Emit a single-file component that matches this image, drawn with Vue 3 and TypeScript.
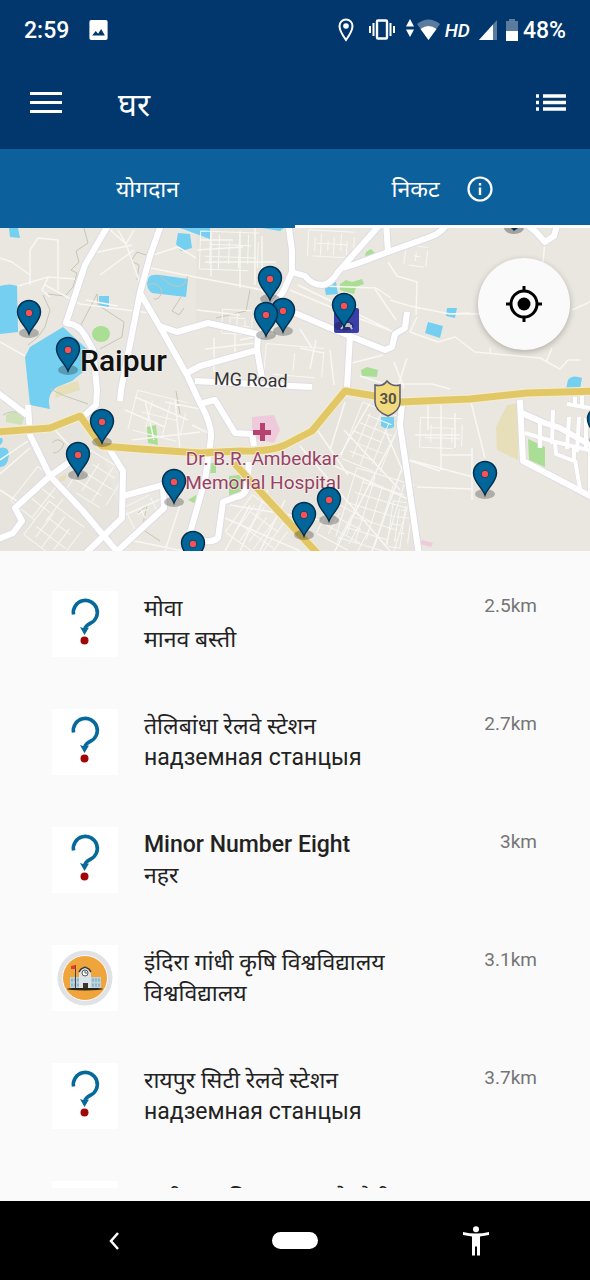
<script setup lang="ts">
interface Place {
  name: string
  kind?: string
  distance?: string
  icon: 'unknown' | 'school' | 'blank'
  latin?: boolean
}

interface Block {
  x: number
  y: number
  w: number
  h: number
  cols: number
  rows: number
  angle: number
}

const places: Place[] = [
  { name: 'मोवा', kind: 'मानव बस्ती', distance: '2.5km', icon: 'unknown' },
  { name: 'तेलिबांधा रेलवे स्टेशन', kind: 'надземная станцыя', distance: '2.7km', icon: 'unknown' },
  { name: 'Minor Number Eight', kind: 'नहर', distance: '3km', icon: 'unknown', latin: true },
  { name: 'इंदिरा गांधी कृषि विश्वविद्यालय', kind: 'विश्वविद्यालय', distance: '3.1km', icon: 'school' },
  { name: 'रायपुर सिटी रेलवे स्टेशन', kind: 'надземная станцыя', distance: '3.7km', icon: 'unknown' },
  { name: 'छत्तीसगढ़ विज्ञान भवन के मैत्री', icon: 'blank' },
]

// Pin tips, in map units; later pins overlap earlier ones.
const pins: [number, number][] = [
  [270, 300], [283, 332], [266, 336], [344, 327], [29, 334], [68, 371], [102, 443],
  [78, 476], [174, 503], [193, 565], [329, 521], [304, 536], [485, 495], [599, 441],
]

const mainRoads: string[] = [
  'M110 222L85 265L66 323Q78 324 84 334L93 350L97 390L96 405L84 416',
  'M162 222L150 256L140 293L121 390L120 401',
  'M140 293L160 327L187 375L200 403Q212 424 211 438L205 480L188 540',
  'M160 326L177 332L208 323L262 335L264 318L283 292L292 272L292 250L288 222',
  'M187 373L200 366L257 350L258 335M257 350L262 378',
  'M195 381L312 387',
  'M292 272L305 276Q312 285 322 285Q331 284 338 272L384 220',
  'M343 268L356 264L388 252L430 237Q442 233 448 222M388 252L386 222',
  'M295 313L335 330L385 350L392 347L395 334L405 328L407 312',
  'M350 335L347 388',
  'M524 222L536 232L545 242L554 236L558 222',
  'M-2 393L27 415M28 405L30 435L50 476L83 511L120 555',
  'M84 452L50 476L15 508L22 521L13 533L-2 539',
  'M110 450L123 471L122 518L84 555M123 496L163 485L164 508L113 555',
  'M203 403L215 400L235 433L252 434L254 446M249 462L247 487Q245 496 236 497L223 502L218 538Q210 544 198 539',
  'M402 404L400 425L419 555',
  'M520 400L523 461L592 497M522 413L542 422L560 428L592 446',
]

const estateRoads =
  'M540 421V448M553 410L552 444M569 417L567 449M579 417L577 452M586 418V450M525 433L552 441L592 451M555 443L556 454L574 461V448M575 460L580 489M590 448V493M567 404L590 408M575 397V405M582 396V407'

const minorRoads =
  'M30 285V250L38 238L58 240V290M0 258L12 262L30 275M18 286L48 277L75 279M45 285L80 304L150 313M48 278L42 290L50 297M108 228L126 244L140 283M93 253L132 245M118 230L126 244L134 230M100 275L134 250M86 300L118 306M146 267L200 278M150 256L178 247L196 258M0 342L25 356M195 277L258 289M255 289L283 292M197 250L243 247M200 240H233M240 231V288M205 262H276M211 232V276M255 228V285M262 236V292M197 310L240 315M214 338V372M235 330V360M205 349L256 343M290 290L350 315L394 332M298 285L390 330M322 286L376 288L391 298M375 289L396 320M388 262L397 276L417 282L416 315M390 300L410 306L450 314L470 313M455 314H480M417 317L410 332L438 342L455 337L475 352L540 358L560 369L568 360H580M490 348L491 354M552 348L546 362M545 242L543 262M572 310L590 302M392 384H432L450 389M394 362L404 388M407 358L398 386M330 350L334 385M352 363L383 355M360 376L382 383M300 348L324 353M300 329L312 348M316 340L310 369M165 402L205 410M145 400L154 440M125 410L165 427M135 397L188 420M175 400L180 450M132 440L200 432M0 474L30 448M0 460L28 441M0 490L20 503M55 430L75 452M240 340L275 333M410 460L473 477M417 487L473 489M471 402L485 458M472 448V500M441 404V470M428 405V430M455 413V448M415 435H460M441 455H473M402 458L440 471M300 446L390 551M318 431L348 475M345 402L330 450M370 403L340 455M385 430L405 476M344 430L400 490M395 435L335 551M405 460L372 551M230 505L320 520M218 515L300 551M250 505L225 551M268 490L240 551M285 500L260 551M335 466L410 500M125 515L170 495M130 540L183 551M180 505L165 551M192 425L208 433'

const blocks: Block[] = [
  { x: 200, y: 232, w: 58, h: 38, cols: 6, rows: 3, angle: 2 },
  { x: 308, y: 231, w: 46, h: 26, cols: 7, rows: 2, angle: 3 },
  { x: 222, y: 310, w: 30, h: 24, cols: 4, rows: 3, angle: 3 },
  { x: 405, y: 246, w: 22, h: 20, cols: 2, rows: 2, angle: 8 },
  { x: 20, y: 474, w: 40, h: 44, cols: 3, rows: 3, angle: 38 },
  { x: 76, y: 458, w: 42, h: 44, cols: 3, rows: 4, angle: 32 },
  { x: 32, y: 510, w: 44, h: 42, cols: 4, rows: 3, angle: 37 },
  { x: 128, y: 500, w: 28, h: 24, cols: 2, rows: 2, angle: -26 },
  { x: 234, y: 505, w: 50, h: 46, cols: 6, rows: 3, angle: 36 },
  { x: 350, y: 408, w: 42, h: 60, cols: 4, rows: 6, angle: 22 },
  { x: 345, y: 475, w: 60, h: 72, cols: 6, rows: 6, angle: 17 },
  { x: 322, y: 510, w: 45, h: 36, cols: 4, rows: 3, angle: 28 },
  { x: 390, y: 502, w: 20, h: 46, cols: 3, rows: 6, angle: 8 },
  { x: 420, y: 418, w: 42, h: 30, cols: 4, rows: 3, angle: 2 },
  { x: 265, y: 346, w: 58, h: 30, cols: 2, rows: 1, angle: 5 },
  { x: 132, y: 396, w: 52, h: 40, cols: 3, rows: 2, angle: 14 },
]

/** Street lines of a rectangular block, both directions. */
function blockPath(b: Block): string {
  const parts: string[] = []
  for (let i = 0; i <= b.cols; i++) {
    const x = Math.round(b.x + (b.w * i) / b.cols)
    const trim = (i * 7) % 11
    parts.push(`M${x} ${b.y + trim}V${b.y + b.h - ((i * 5) % 9)}`)
  }
  for (let i = 0; i <= b.rows; i++) {
    const y = Math.round(b.y + (b.h * i) / b.rows)
    parts.push(`M${b.x + ((i * 9) % 13)} ${y}H${b.x + b.w - ((i * 7) % 12)}`)
  }
  return parts.join('')
}

function blockTurn(b: Block): string {
  return `rotate(${b.angle} ${b.x + b.w / 2} ${b.y + b.h / 2})`
}
</script>

<template>
  <div class="screen">
    <header class="top">
      <div class="status">
        <span class="clock">2:59</span>
        <svg class="picture" viewBox="0 0 20 22" aria-hidden="true">
          <path fill="#fff" fill-rule="evenodd" d="M2 0H18Q20 0 20 2V20Q20 22 18 22H2Q0 22 0 20V2Q0 0 2 0ZM3 17H17L13 10L9.500 15L7 12Z" />
        </svg>
        <span class="spacer"></span>
        <svg class="place" viewBox="0 0 16 24" aria-hidden="true">
          <path fill="none" stroke="#fff" stroke-width="2" d="M8 22Q1.500 13 1.500 8A6.500 6.500 0 0 1 14.500 8Q14.500 13 8 22Z" />
          <circle cx="8" cy="8" r="2.800" fill="#fff" />
        </svg>
        <svg class="vibrate" viewBox="0 0 28 24" aria-hidden="true">
          <rect x="9" y="2.500" width="10" height="18" rx="1" fill="none" stroke="#fff" stroke-width="2.400" />
          <path stroke="#fff" stroke-width="2" d="M5.500 5V18M22.500 5V18M2 8V15M26 8V15" />
        </svg>
        <svg class="wifi" viewBox="0 0 34 24" aria-hidden="true">
          <path fill="#fff" d="M0 8.500L4 1L8 8.500ZM0 11.500H8L4 19Z" />
          <path fill="#5b7b9f" d="M11 6Q22.500 -3 34 6L22.500 22Z" />
          <path fill="#fff" d="M14.500 11Q22.500 5 30.500 11L22.500 22Z" />
        </svg>
        <span class="hd">HD</span>
        <svg class="signal" viewBox="0 0 18 20" aria-hidden="true">
          <path fill="#5b7b9f" d="M18 0V20H0Z" />
          <path fill="#fff" d="M14 4.400V20H0Z" />
        </svg>
        <svg class="battery" viewBox="0 0 12 22" aria-hidden="true">
          <path fill="#5b7b9f" d="M3 0H9V2H12V14H0V2H3Z" />
          <path fill="#fff" d="M0 12H12V22H0Z" />
        </svg>
        <span class="percent">48%</span>
      </div>
      <div class="appbar">
        <button class="icon-button menu" type="button" aria-label="मेनू">
          <svg viewBox="0 0 32 24" width="32" height="24"><path stroke="#fff" stroke-width="3" d="M0 2.500H32M0 11.500H32M0 20.500H32" /></svg>
        </button>
        <h1>घर</h1>
        <button class="icon-button" type="button" aria-label="सूची">
          <svg viewBox="0 0 30 20" width="30" height="20">
            <path stroke="#fff" stroke-width="3.500" d="M0 3H3M7 3H30M0 9.500H3M7 9.500H30M0 16H3M7 16H30" />
          </svg>
        </button>
      </div>
      <nav class="tabs">
        <button class="tab" type="button"><span>योगदान</span></button>
        <button class="tab active" type="button">
          <span>निकट</span>
          <svg viewBox="0 0 26 26" width="26" height="26" aria-hidden="true">
            <circle cx="13" cy="13" r="11.500" fill="none" stroke="#fff" stroke-width="2.200" />
            <path stroke="#fff" stroke-width="2.400" d="M13 11.500V19M13 7V9.500" />
          </svg>
        </button>
      </nav>
    </header>

    <section class="map" aria-label="Raipur">
      <svg class="canvas" viewBox="0 228 590 323" preserveAspectRatio="xMidYMid slice">
        <defs>
          <g id="pin">
            <path
              fill="#006699" stroke="#04304f" stroke-width="1.500"
              d="M0 0C-3 -8 -11.500 -13 -11.500 -22A11.500 11.500 0 0 1 11.500 -22C11.500 -13 3 -8 0 0Z"
            />
            <circle cy="-21" r="3.800" fill="#ff5054" stroke="#064a70" stroke-width="1" />
          </g>
        </defs>
        <rect y="228" width="590" height="323" fill="#eae7e0" />

        <g fill="#e7e4dd">
          <path d="M196 228H288L292 272L262 335L196 325Z" />
          <path d="M0 435L80 420L102 450L122 518L87 551H0Z" />
          <path d="M282 450L345 398L400 408L418 551H315L233 466Z" />
        </g>

        <g fill="#75cff0">
          <path d="M0 286Q10 283 17 286L18 332L0 334Z" />
          <path d="M63 327L30 347L25 357L30 405L50 409Q46 394 57 387L72 381L83 372L88 350Z" />
          <path d="M9 228H18L20 238L10 237ZM99 296H109V308L99 305ZM178 233L190 234L192 248L181 251L176 244ZM180 228H210V239Z" />
          <path d="M149 277Q152 274 160 275L188 279L186 297L152 293Q144 287 149 277ZM262 228H284L280 231Z" />
          <path d="M324 284L336 282L338 294L326 295ZM447 308H457L455 318L446 316ZM428 322L443 326L440 338L425 333ZM568 380Q572 374 582 378L580 389H566Z" />
          <path d="M0 438V445Q4 443 2 438ZM0 448Q8 446 9 454Q8 467 0 467ZM381 417H394V427Q387 431 381 426Z" />
        </g>
        <g fill="#aade94">
          <ellipse cx="101" cy="334" rx="9" ry="8" />
          <path d="M340 284L346 280L352 282L362 279L364 284L356 287L354 294L340 290ZM366 252L371 249L377 255L365 256ZM361 370L367 367L378 370L377 377L362 376Z" />
          <path d="M147 427L156 425L158 445L148 443ZM528 439L545 447V467L529 460ZM229 476L250 474L248 487L229 497ZM211 463H216V473H210ZM188 500L196 495V504Z" />
          <path fill="#cfe1b9" d="M6 415Q14 409 25 414L22 425L6 422Z" />
        </g>
        <path fill="#e6dfb9" d="M507 405L518 403V460L497 450L496 427ZM59 477L67 474L65 480L58 483ZM57 387L78 381L80 390L55 398Z" />
        <path fill="#efcadb" d="M252 417L274 415L280 430L274 443L252 438ZM422 540L433 543L431 547L420 544Z" />

        <path
          class="trail"
          d="M84 228L88 243L76 251L79 262L71 270L77 273L73 287L65 296L48 294M43 295L50 310L45 327L38 337L28 345M81 325L97 294L98 305L124 322L122 337L100 349M137 280L139 265L131 261L137 252L146 255M148 285Q157 280 162 291Q160 300 154 299M160 276Q176 292 184 284L188 276M181 297L172 311L179 315L184 308M3 415Q12 409 23 414M50 389L65 396L88 404M52 443Q58 436 64 444Q60 453 53 453M216 318L246 311L250 290M138 513L147 505L142 529L160 541M176 391L180 414"
        />
        <path class="lane" :d="minorRoads" />
        <path v-for="(b, i) in blocks" :key="i" class="lane fine" :d="blockPath(b)" :transform="blockTurn(b)" />

        <path class="casing" :d="mainRoads.join('')" />
        <path class="casing small" :d="estateRoads" />
        <path class="road small" :d="estateRoads" />
        <path class="road" :d="mainRoads.join('')" />
        <path class="highway edge" d="M-5 432L50 428L80 416L102 446L140 449L200 453L240 451Q270 452 285 445L312 431L345 391L375 396L400 402L470 399L527 393L595 391M234 463L318 554" />
        <path class="highway" d="M-5 432L50 428L80 416L102 446L140 449L200 453L240 451Q270 452 285 445L312 431L345 391L375 396L400 402L470 399L527 393L595 391M234 463L318 554" />

        <path fill="#b8426f" d="M260 423H265V430H271V435H265V441H260V435H253V430H260Z" />
        <rect x="334" y="308" width="25" height="25" rx="2" fill="#3a3ea8" />
        <path fill="none" stroke="#fff" stroke-width="2" d="M341 329L345 324H349L352 329M342 326H352" />
        <path fill="#f1da7c" stroke="#5c5b70" stroke-width="1.500" d="M375 385Q383 387 387 381Q392 387 400 385V402Q400 411 388 416Q375 411 375 402Z" />

        <g class="labels">
          <text class="shield" x="388" y="404" text-anchor="middle">30</text>
          <text class="city" x="80" y="371">Raipur</text>
          <text class="street" x="214" y="386" transform="rotate(2 250 380)">MG Road</text>
          <text class="poi" x="262" y="465" text-anchor="middle">Dr. B.R. Ambedkar</text>
          <text class="poi" x="263" y="489" text-anchor="middle">Memorial Hospital</text>
        </g>

        <g v-for="([x, y], i) in pins" :key="i">
          <ellipse :cx="x" :cy="y - 1" rx="10" ry="5" fill="#000" fill-opacity="0.25" />
          <use href="#pin" :x="x" :y="y" />
        </g>
        <ellipse cx="514" cy="228" rx="10" ry="6" fill="#000" fill-opacity="0.3" />
        <path d="M511 228H518L514 231Z" fill="#04304f" />
      </svg>
      <button class="locate" type="button" aria-label="मेरा स्थान">
        <svg viewBox="0 0 36 36" width="36" height="36">
          <circle cx="18" cy="18" r="13" fill="none" stroke="#000" stroke-width="3" />
          <circle cx="18" cy="18" r="6.500" />
          <path stroke="#000" stroke-width="3" d="M18 0V6M18 30V36M0 18H6M30 18H36" />
        </svg>
      </button>
    </section>

    <main class="results">
      <ul>
        <li v-for="p in places" :key="p.name" class="row">
          <span class="thumb">
            <svg v-if="p.icon === 'unknown'" viewBox="0 0 66 66" aria-hidden="true">
              <path fill="none" stroke="#06699c" stroke-width="3.600" d="M21.500 23.500A12 12 0 1 1 38 32.500Q33.500 34.500 32.500 39" />
              <path fill="#06699c" d="M28 36L32.500 37.500L37 36.500L32.500 44Z" />
              <circle cx="32.500" cy="49.500" r="4" fill="#a00808" />
            </svg>
            <svg v-else-if="p.icon === 'school'" viewBox="0 0 66 66" aria-hidden="true">
              <circle cx="33" cy="33" r="27.500" fill="#e1e2e5" />
              <circle cx="33" cy="33" r="22.500" fill="#f0a43c" stroke="#fff" stroke-width="1" />
              <ellipse cx="33" cy="44" rx="18" ry="1.500" fill="#2d2418" />
              <path fill="#bdd3dc" d="M18 32H49V43H18Z" />
              <path fill="#dbe5e9" d="M27 26L33 21L39 26V43H27Z" />
              <path fill="none" stroke="#3d3a3a" stroke-width="1.500" d="M27 27L29 24L33 22L37 24L39 27" />
              <circle cx="33" cy="28" r="3" fill="#fff" stroke="#555" stroke-width="1" />
              <path fill="none" stroke="#555" stroke-width="1" d="M33 26V28H35" />
              <path fill="#40352d" d="M31 38H36V43H31Z" />
              <path stroke="#8fb4cb" stroke-width="3" stroke-dasharray="2 1" d="M19 35H27M40 35H48M19 40H27M40 40H48" />
              <path stroke="#444" stroke-width="1" d="M23.500 20V43" />
              <path fill="#df3d24" d="M19 21L23.500 20V24H19Z" />
            </svg>
          </span>
          <div class="copy">
            <p :class="{ latin: p.latin }">{{ p.name }}</p>
            <p v-if="p.kind">{{ p.kind }}</p>
          </div>
          <span v-if="p.distance" class="distance">{{ p.distance }}</span>
        </li>
      </ul>
    </main>

    <footer class="navbar">
      <button class="nav" type="button" aria-label="वापस">
        <svg viewBox="0 0 10 18" width="10" height="18"><path fill="none" stroke="#fff" stroke-width="2.500" d="M9 1L2 9L9 17" /></svg>
      </button>
      <button class="nav" type="button" aria-label="होम"><span class="pill"></span></button>
      <button class="nav" type="button" aria-label="सुलभता">
        <svg viewBox="0 0 26 30" width="26" height="30">
          <circle cx="13" cy="3.300" r="3" fill="#fff" />
          <path fill="#fff" d="M0 6Q13 9 26 6V9L17 10.500V29.500H14V20.500H12V29.500H9V10.500L0 9Z" />
        </svg>
      </button>
    </footer>
  </div>
</template>

<style>
body {
  margin: 0;
  background: #fafafa;
}
</style>

<style scoped>
.screen {
  display: flex;
  flex-direction: column;
  height: 100vh;
  overflow: hidden;
  background: #fafafa;
  font-family: Roboto, "Noto Sans Devanagari", "Noto Sans", sans-serif;
  color: #222;
}

button {
  border: 0;
  padding: 0;
  background: none;
  color: inherit;
  font: inherit;
}

svg {
  display: block;
}

.top {
  flex: none;
  background: #01376d;
  color: #fff;
}

.status {
  display: flex;
  align-items: center;
  height: 60px;
  padding: 0 24px;
  font-size: 23px;
  font-weight: 500;
}

.picture {
  width: 19px;
  height: 20px;
  margin-left: 20px;
}

.spacer {
  flex: 1;
}

.place {
  width: 16px;
  height: 24px;
}

.vibrate {
  width: 28px;
  height: 24px;
  margin-left: 14px;
}

.wifi {
  width: 34px;
  height: 24px;
  margin-left: 10px;
}

.hd {
  margin-left: 5px;
  font-size: 19px;
  font-style: italic;
}

.signal {
  width: 18px;
  height: 20px;
  margin-left: 9px;
}

.battery {
  width: 12px;
  height: 22px;
  margin: 0 5px 0 9px;
}

.appbar {
  display: flex;
  align-items: center;
  height: 89px;
  padding: 0 24px 4px 30px;
  box-sizing: border-box;
}

h1 {
  flex: 1;
  margin: 0 0 0 56px;
  padding-top: 4px;
  font-size: 32px;
  font-weight: 400;
  line-height: 36px;
}

.tabs {
  display: flex;
  background: #0c609c;
}

.tab {
  display: flex;
  flex: 1;
  align-items: center;
  justify-content: center;
  gap: 28px;
  height: 79px;
  box-sizing: border-box;
  padding-top: 4px;
  border-bottom: 3px solid transparent;
  font-size: 23px;
}

.tab span {
  padding-top: 4px;
}

.tab.active {
  border-bottom-color: #fff;
}

.map {
  position: relative;
  flex: none;
}

.canvas {
  width: 100%;
}

.lane,
.trail,
.road,
.casing,
.highway {
  fill: none;
  stroke-linejoin: round;
}

.lane {
  stroke: #f8f7f4;
  stroke-width: 1.5px;
}

.lane.fine {
  stroke-width: 1px;
}

.trail {
  stroke: #c4c7b4;
  stroke-width: 1px;
}

.casing {
  stroke: #dddce6;
  stroke-width: 8px;
}

.road {
  stroke: #fff;
  stroke-width: 6px;
}

.casing.small {
  stroke-width: 5px;
}

.road.small {
  stroke-width: 4px;
}

.highway {
  stroke: #e2c767;
  stroke-width: 7px;
}

.highway.edge {
  stroke: #f5edcb;
  stroke-width: 9px;
}

.labels {
  paint-order: stroke;
  stroke: #f4f2ee;
  stroke-opacity: 0.7;
  stroke-width: 2px;
}

.city {
  font-size: 30px;
  font-weight: 500;
  fill: #111;
}

.street {
  font-size: 18px;
  fill: #333;
}

.poi {
  font-size: 19px;
  fill: #984164;
}

.shield {
  font-size: 15px;
  font-weight: 700;
  fill: #55524a;
  stroke: none;
}

.locate {
  position: absolute;
  top: 30px;
  right: 20px;
  display: grid;
  place-items: center;
  width: 92px;
  height: 92px;
  border-radius: 50%;
  background: #fafafa;
  box-shadow: 0 2px 6px rgba(0, 0, 0, 0.25);
}

.results {
  flex: 1;
  min-height: 0;
  margin-bottom: 13px;
  overflow: hidden;
}

ul {
  margin: 0;
  padding: 40px 53px 0 52px;
  list-style: none;
}

.row {
  display: flex;
  align-items: flex-start;
  height: 118px;
}

.thumb {
  width: 66px;
  height: 66px;
  background: #fff;
}

.copy {
  flex: 1;
  margin-left: 26px;
  padding-top: 2px;
}

p {
  margin: 0;
  font-size: 23px;
  line-height: 31px;
  white-space: nowrap;
}

.latin {
  font-weight: 500;
}

.distance {
  color: #757575;
  font-size: 19px;
  line-height: 29px;
}

.navbar {
  display: flex;
  flex: none;
  align-items: center;
  justify-content: space-between;
  height: 79px;
  padding: 0 80px;
  background: #000;
}

.nav {
  display: grid;
  place-items: center;
  width: 68px;
  height: 48px;
}

.pill {
  width: 46px;
  height: 17px;
  border-radius: 9px;
  background: #fff;
}
</style>
